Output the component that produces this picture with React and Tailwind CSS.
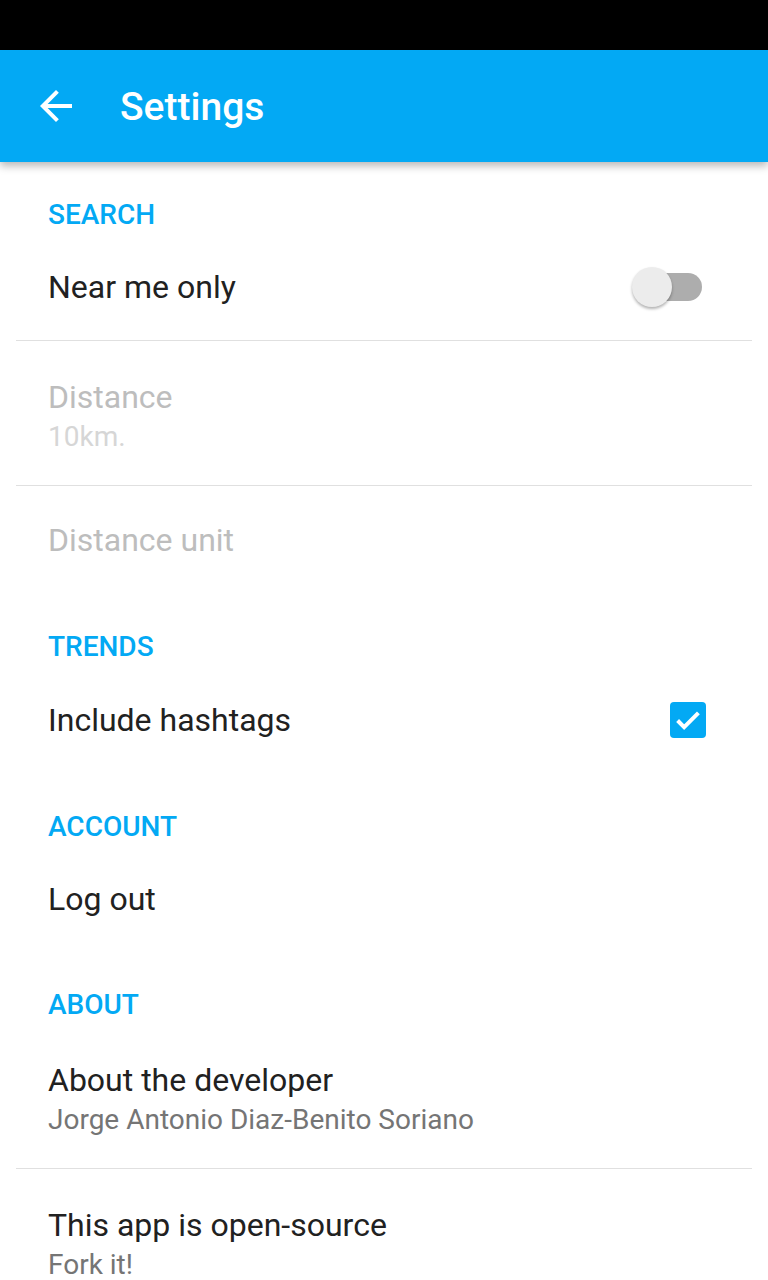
import React from "react";

const BLUE = "bg-[#03a9f4]";

const Category = ({ label }) => (
  <div className="h-[72px] px-12 pt-[39px]">
    <div className="text-[28px] leading-[28px] font-medium text-[#03a9f4]">{label}</div>
  </div>
);

const Divider = () => <div className="mx-4 h-px bg-[#e0e0e0]" />;

const Row = ({ title, disabled, right, h = "h-[106px]", pr = "pr-[62px]" }) => (
  <div className={`${h} flex items-center justify-between pl-12 ${pr}`}>
    <div className={`text-[32px] leading-[40px] ${disabled ? "text-[#bdbdbd]" : "text-[#212121]"}`}>{title}</div>
    {right}
  </div>
);

const TwoLine = ({ title, summary, disabled }) => (
  <div className="h-[144px] flex flex-col pl-12 pt-[36px]">
    <div className={`text-[32px] leading-[40px] ${disabled ? "text-[#bdbdbd]" : "text-[#212121]"}`}>{title}</div>
    <div className={`text-[28px] leading-[40px] ${disabled ? "text-[#d6d6d6]" : "text-[#757575]"}`}>{summary}</div>
  </div>
);

const Switch = () => (
  <div className="relative w-[70px] h-[42px] flex items-center">
    <div className="ml-[2px] w-[68px] h-[28px] rounded-full bg-[#adadad]" />
    <div className="absolute left-0 top-px w-10 h-10 rounded-full bg-[#ececec] shadow-[0_2px_3px_rgba(0,0,0,0.3)]" />
  </div>
);

const Checkbox = () => (
  <div className="w-9 h-9 rounded-[4px] bg-[#03a9f4] flex items-center justify-center">
    <svg width="32" height="32" viewBox="0 0 24 24">
      <path d="M4.2 12.4l4.9 4.9L19.8 6.6" fill="none" stroke="white" strokeWidth="3" />
    </svg>
  </div>
);

export default function App() {
  return (
    <div className="w-[768px] h-[1280px] bg-white overflow-hidden" style={{ fontFamily: "Roboto, 'Noto Sans', sans-serif" }}>
      <div className="h-[50px] bg-black" />
      <div className={`relative z-10 h-[112px] ${BLUE} flex items-center shadow-[0_4px_8px_rgba(0,0,0,0.28)]`}>
        <div className="w-[120px] flex items-center pl-8">
          <svg width="48" height="48" viewBox="0 0 24 24" fill="white">
            <path d="M20 11H7.83l5.59-5.59L12 4l-8 8 8 8 1.41-1.41L7.83 13H20v-2z" />
          </svg>
        </div>
        <div className="pt-[2px] text-[39px] leading-[48px] font-medium text-white">Settings</div>
      </div>

      <Category label="SEARCH" />
      <Row title="Near me only" right={<Switch />} pr="pr-[66px]" />
      <Divider />
      <TwoLine title="Distance" summary="10km." disabled />
      <Divider />
      <Row title="Distance unit" disabled h="h-[108px]" />

      <Category label="TRENDS" />
      <Row title="Include hashtags" right={<Checkbox />} h="h-[108px]" />

      <Category label="ACCOUNT" />
      <Row title="Log out" />

      <Category label="ABOUT" />
      <TwoLine title="About the developer" summary="Jorge Antonio Diaz-Benito Soriano" />
      <Divider />
      <TwoLine title="This app is open-source" summary="Fork it!" />
    </div>
  );
}
